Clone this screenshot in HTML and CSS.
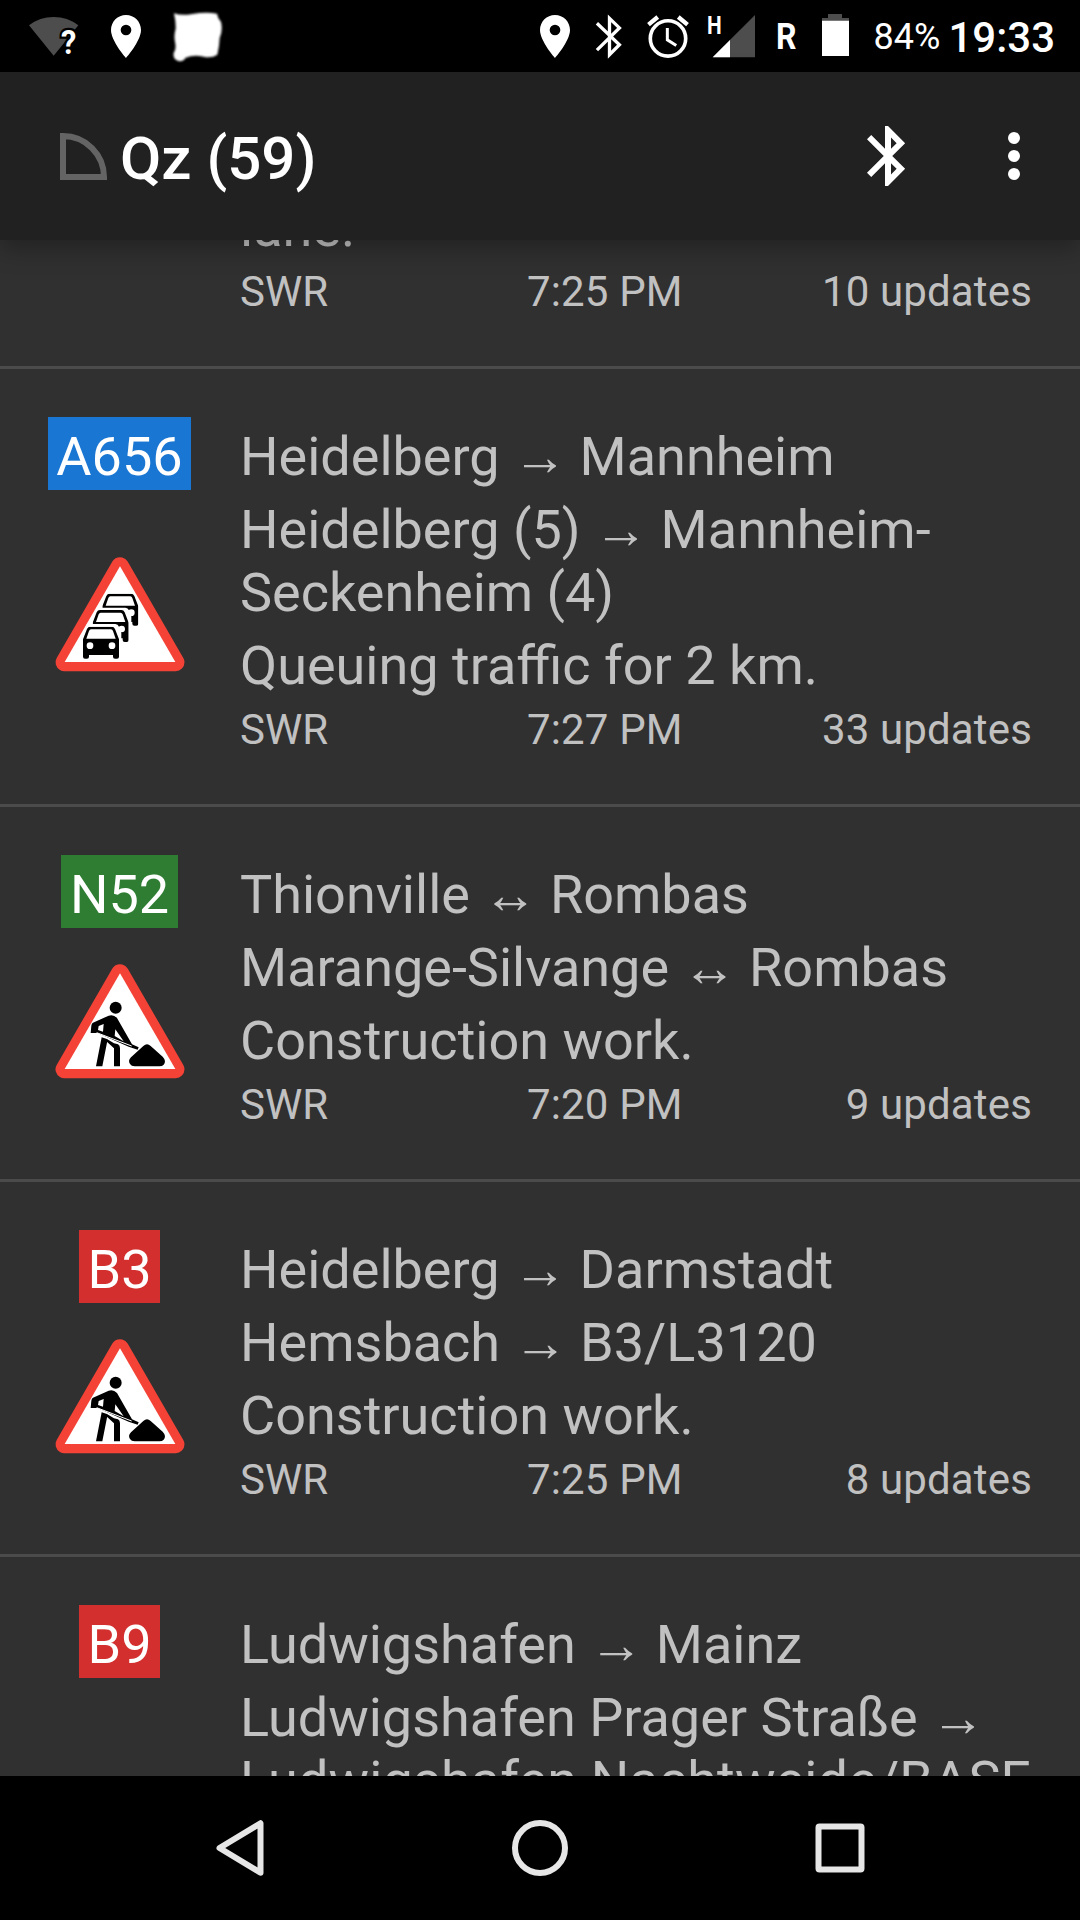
FILE: index.html
```html
<!DOCTYPE html>
<html lang="en">
<head>
    <meta charset="UTF-8">
    <meta name="viewport" content="width=device-width, initial-scale=1.0">
    <title>Qz (59)</title>
    <link rel="stylesheet" href="styles.css">
</head>
<body>
    <!-- shared icons -->
    <svg class="defs" width="0" height="0">
        <symbol id="pin" viewBox="0 0 90 129">
            <path fill="#fff" fill-rule="evenodd" d="M45 0C20 0 0 20 0 45c0 33 45 84 45 84s45-51 45-84C90 20 70 0 45 0zm0 61a16 16 0 1 1 0-32 16 16 0 0 1 0 32z"/>
        </symbol>
        <symbol id="bluetooth" viewBox="0 0 24 24">
            <path fill="#fff" d="M17.71 7.71L12 2h-1v7.59L6.41 5 5 6.41 10.59 12 5 17.59 6.41 19 11 14.41V22h1l5.71-5.71-4.3-4.29 4.3-4.29zM13 5.83l1.88 1.88L13 9.59V5.83zm1.88 10.46L13 18.17v-3.76l1.88 1.88z"/>
        </symbol>
        <symbol id="triangle" viewBox="0 0 432 432">
            <path fill="#fff" stroke="#f44336" stroke-width="53" stroke-linejoin="round" d="M216 45L49 334H383z"/>
            <path fill="#fff" d="M216 46L50 333H382z"/>
        </symbol>
        <symbol id="car" viewBox="0 0 108 98">
            <path fill-rule="evenodd" d="M22 0H86Q93 0 96 7L108 38V90Q108 96 102 96H96Q90 96 90 90V85H18V90Q18 96 12 96H6Q0 96 0 90V38L12 7Q15 0 22 0zM24 8Q20 8 18 13L10 36H98L90 13Q88 8 84 8zM21 47a10 10 0 1 0 0 20a10 10 0 0 0 0-20zM87 47a10 10 0 1 0 0 20a10 10 0 0 0 0-20z"/>
        </symbol>
        <symbol id="sign-queue" viewBox="0 0 432 432">
            <use href="#triangle" width="432" height="432"/>
            <use href="#car" x="163" y="128" width="108" height="98"/>
            <path fill="#fff" d="M146 170H232Q240 170 243 178L250 196V280H130z"/>
            <use href="#car" x="134" y="177" width="108" height="98"/>
            <path fill="#fff" d="M116 219H202Q210 219 213 227L220 246V330H96z"/>
            <use href="#car" x="105" y="227" width="108" height="98"/>
        </symbol>
        <symbol id="sign-works" viewBox="0 0 432 432">
            <use href="#triangle" width="432" height="432"/>
            <g transform="translate(-54 -353)">
                <circle cx="257" cy="502" r="18"/>
                <path d="M189 547L236 526Q250 521 261 533L306 612L326 621L323 628L296 619L203 578H182L184 556Q185 549 189 547zM206 557L204 569L219 574L221 551zM256 567L254 587L281 603z" fill-rule="evenodd"/>
                <path fill="none" stroke="#fff" stroke-width="3" d="M200 577L305 617"/>
                <path d="M215 591L233 597L217 678H198zM232 597L252 609L264 612Q270 615 270 624V678H252V624L229 603z"/>
                <path d="M340 617Q351 607 362 617L398 649Q410 662 401 673Q397 678 388 678H314Q304 678 300 671Q293 661 303 651z"/>
            </g>
        </symbol>
    </svg>

    <div class="screen">
        <div class="status-bar">
            <svg class="wifi" viewBox="88 48 150 120">
                <path fill="#4d4d4d" d="M88 76Q120 51 162 51T236 76L162 167z"/>
                <text class="wifi-mark" x="184" y="161" textLength="46" lengthAdjust="spacingAndGlyphs">?</text>
            </svg>
            <svg class="pin"><use href="#pin"/></svg>
            <svg class="blob" viewBox="520 34 150 150">
                <path fill="#fff" d="M523 38Q545 46 578 40Q620 33 652 39Q654 53 664 64Q670 90 660 112Q659 138 653 162Q636 173 612 168Q582 161 558 171Q550 184 536 181Q519 176 522 157Q531 145 526 124Q522 105 528 84Q529 66 523 38z"/>
            </svg>
            <div class="status-right">
                <svg class="pin"><use href="#pin"/></svg>
                <svg class="status-bt" viewBox="224 44 80 130">
                    <path fill="none" stroke="#fff" stroke-width="10" d="M229 69L297 134L267 164V54L297 83L229 150"/>
                </svg>
                <svg class="alarm" viewBox="380 44 126 130">
                    <circle cx="443" cy="115" r="53.500" fill="none" stroke="#fff" stroke-width="11"/>
                    <path fill="none" stroke="#fff" stroke-width="9" d="M441 83V119L468 136"/>
                    <path fill="none" stroke="#fff" stroke-width="13" d="M384 73L412 50M502 73L474 50"/>
                </svg>
                <svg class="signal" viewBox="564 44 141 129">
                    <path fill="#4d4d4d" d="M705 44V171H578z"/>
                    <path fill="#fff" d="M630 119V171H578z"/>
                    <text class="network" x="561" y="101" textLength="44" lengthAdjust="spacingAndGlyphs">H</text>
                </svg>
                <svg class="roaming" viewBox="0 0 22 42">
                    <text x="0" y="34" textLength="20.500" lengthAdjust="spacingAndGlyphs">R</text>
                </svg>
                <svg class="battery" viewBox="126 42 81 126">
                    <path fill="#4d4d4d" d="M144 42H186V54H207V62H126V54H144z"/>
                    <path fill="#fff" d="M126 62H207V168H126z"/>
                </svg>
                <span class="percent">84%</span>
                <span class="clock">19:33</span>
            </div>
        </div>

        <div class="app-bar">
            <svg class="logo" viewBox="0 0 141 141">
                <path fill="none" stroke="#646464" stroke-width="18" d="M9 9V132H132A123 123 0 0 0 9 9z"/>
            </svg>
            <h1>Qz (59)</h1>
            <svg class="action"><use href="#bluetooth"/></svg>
            <svg class="action" viewBox="0 0 24 24">
                <g fill="#fff"><circle cx="12" cy="6" r="2"/><circle cx="12" cy="12" r="2"/><circle cx="12" cy="18" r="2"/></g>
            </svg>
        </div>

        <div class="list">
            <div class="item item-cut">
                <div class="side"></div>
                <div class="content">
                    <p>lane.</p>
                    <div class="meta"><span>SWR</span><span>7:25 PM</span><span>10 updates</span></div>
                </div>
            </div>
            <div class="item">
                <div class="side">
                    <span class="road blue">A656</span>
                    <svg class="sign"><use href="#sign-queue"/></svg>
                </div>
                <div class="content">
                    <p>Heidelberg <i>→</i> Mannheim</p>
                    <p>Heidelberg (5) <i>→</i> Mannheim-Seckenheim (4)</p>
                    <p>Queuing traffic for 2 km.</p>
                    <div class="meta"><span>SWR</span><span>7:27 PM</span><span>33 updates</span></div>
                </div>
            </div>
            <div class="item">
                <div class="side">
                    <span class="road green">N52</span>
                    <svg class="sign"><use href="#sign-works"/></svg>
                </div>
                <div class="content">
                    <p>Thionville <i>↔</i> Rombas</p>
                    <p>Marange-Silvange <i>↔</i> Rombas</p>
                    <p>Construction work.</p>
                    <div class="meta"><span>SWR</span><span>7:20 PM</span><span>9 updates</span></div>
                </div>
            </div>
            <div class="item">
                <div class="side">
                    <span class="road red">B3</span>
                    <svg class="sign"><use href="#sign-works"/></svg>
                </div>
                <div class="content">
                    <p>Heidelberg <i>→</i> Darmstadt</p>
                    <p>Hemsbach <i>→</i> B3/L3120</p>
                    <p>Construction work.</p>
                    <div class="meta"><span>SWR</span><span>7:25 PM</span><span>8 updates</span></div>
                </div>
            </div>
            <div class="item">
                <div class="side">
                    <span class="road red">B9</span>
                </div>
                <div class="content">
                    <p>Ludwigshafen <i>→</i> Mainz</p>
                    <p>Ludwigshafen Prager Straße <i>→</i> <span class="wide">Ludwigshafen Nachtweide/BASF</span></p>
                </div>
            </div>
        </div>

        <div class="nav-bar">
            <svg viewBox="0 0 60 60"><path d="M50.500 5.200V54.800L9.500 30z"/></svg>
            <svg viewBox="0 0 60 60"><circle cx="30" cy="30" r="25"/></svg>
            <svg viewBox="0 0 60 60"><rect x="8.500" y="8.500" width="43" height="43" rx="1"/></svg>
        </div>
    </div>
</body>
</html>
```
FILE: styles.css
```css
* {
    box-sizing: border-box;
}
body {
    margin: 0;
    background: #000;
    font-family: Roboto, "Noto Sans", sans-serif;
}
svg {
    display: block;
    flex: none;
    overflow: visible;
}
.defs {
    position: absolute;
}
.screen {
    display: flex;
    flex-direction: column;
    width: 1080px;
    height: 1920px;
    overflow: hidden;
    background: #303030;
}

/* status bar */
.status-bar {
    display: flex;
    align-items: flex-start;
    height: 72px;
    flex: none;
    padding: 12px 25px 0 29px;
    background: #000;
    color: #fff;
}
.wifi {
    width: 50px;
    height: 40px;
    margin: 4px 32px 0 0;
}
.wifi-mark {
    font-size: 98px;
    font-weight: 700;
    fill: #fff;
    stroke: #000;
    stroke-width: 14px;
    paint-order: stroke;
}
.pin {
    width: 30px;
    height: 43px;
    margin-top: 2.5px;
}
.blob {
    width: 50px;
    height: 50px;
    margin-left: 32px;
    filter: blur(1px);
}
.status-right {
    display: flex;
    margin-left: auto;
}
.status-bt {
    width: 27px;
    height: 43px;
    margin: 3px 0 0 25px;
}
.alarm {
    width: 42px;
    height: 43px;
    margin: 3px 0 0 25px;
}
.signal {
    width: 47px;
    height: 43px;
    margin: 3px 0 0 19px;
}
.network {
    font-size: 79px;
    font-weight: 700;
    fill: #fff;
}
.roaming {
    width: 22px;
    height: 42px;
    margin: 3px 0 0 21px;
    font-size: 36px;
    font-weight: 700;
    fill: #fff;
}
.battery {
    width: 27px;
    height: 42px;
    margin: 2px 0 0 24px;
}
.percent {
    margin: 4px 0 0 25px;
    font-size: 36px;
    line-height: 42px;
}
.clock {
    margin: 1px 0 0 8px;
    font-size: 42px;
    line-height: 49px;
    font-weight: 500;
}

/* app bar */
.app-bar {
    position: relative;
    z-index: 1;
    display: flex;
    align-items: center;
    height: 168px;
    flex: none;
    padding: 0 30px 0 60px;
    background: #212121;
    box-shadow: 0 8px 24px rgba(0, 0, 0, 0.3);
}
.logo {
    width: 47px;
    height: 47px;
    margin-top: 1px;
}
.app-bar h1 {
    flex: 1;
    margin: 5px 0 0 13px;
    color: #fff;
    font-size: 60px;
    line-height: 70px;
    font-weight: 500;
}
.action {
    width: 72px;
    height: 72px;
}
.action + .action {
    margin-left: 54px;
}

/* message list */
.list {
    flex: 1;
    min-height: 0;
    overflow: hidden;
    color: #c1c1c1;
}
.item {
    display: flex;
    gap: 48px;
    padding: 48px;
    border-bottom: 3px solid #4b4b4b;
}
.item-cut {
    margin-top: -52px;
    padding-top: 0;
}
.side {
    display: flex;
    flex-direction: column;
    align-items: center;
    width: 143px;
    margin-right: 1px;
    flex: none;
}
.road {
    padding: 8px 8.5px 2px;
    color: #fff;
    font-size: 54px;
    line-height: 63px;
}
.blue {
    background: #1976d2;
}
.green {
    background: #2e7d32;
}
.red {
    background: #d32f2f;
}
.sign {
    width: 144px;
    height: 144px;
    margin: auto -1px auto 0;
}
.content {
    flex: 1;
    min-width: 0;
}
.content p {
    margin: 0;
    padding: 8px 0 2px;
    font-size: 54px;
    line-height: 63px;
}
.content i {
    margin-right: -0.8px;
    font-family: "Noto Sans", "Liberation Serif", serif;
    font-style: normal;
    line-height: 1px;
}
.wide {
    letter-spacing: 0.12px;
}
.meta {
    display: grid;
    grid-template-columns: 287px 1fr auto;
    padding: 6px 0 2px;
    font-size: 42px;
    line-height: 49px;
}
.meta span + span {
    letter-spacing: 0.15px;
}

/* navigation bar */
.nav-bar {
    display: flex;
    justify-content: center;
    align-items: center;
    gap: 240px;
    height: 144px;
    flex: none;
    background: #000;
}
.nav-bar svg {
    width: 60px;
    height: 60px;
    fill: none;
    stroke: #e6e6e6;
    stroke-width: 6px;
    stroke-linejoin: round;
}
```
